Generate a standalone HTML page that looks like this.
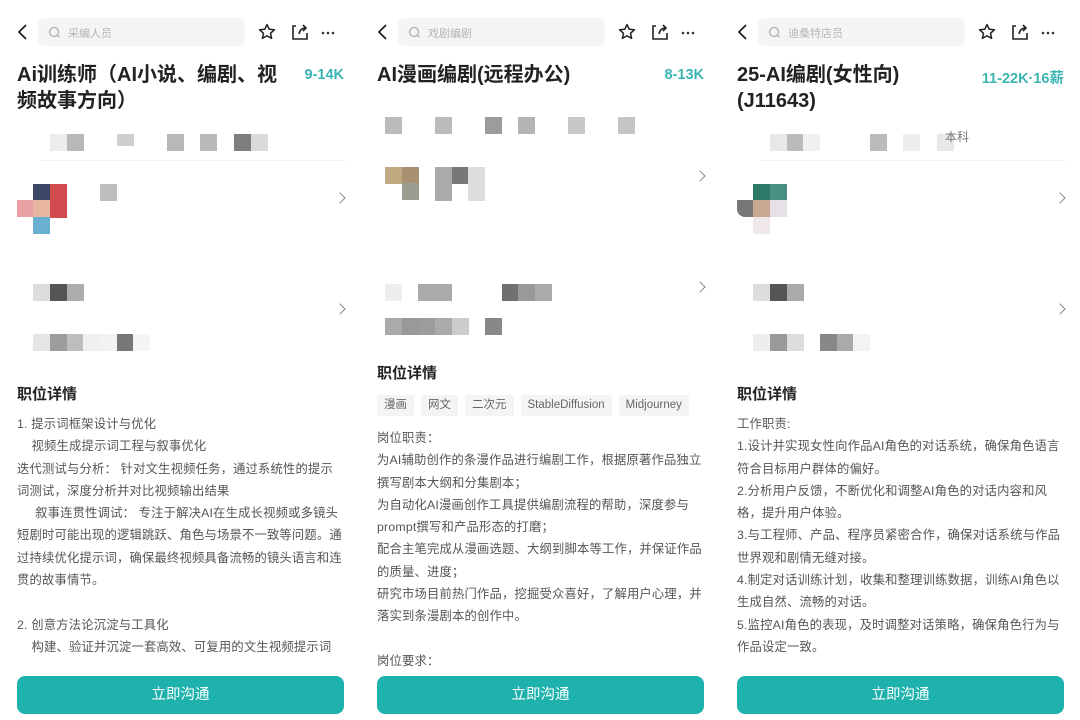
<!DOCTYPE html>
<html><head><meta charset="utf-8"><style>
*{margin:0;padding:0;box-sizing:border-box}
body{width:1080px;height:720px;background:#fff;position:relative;overflow:hidden;font-family:"Liberation Sans","Noto Sans CJK SC",sans-serif}
.p{position:absolute;top:0;width:360px;height:720px;overflow:hidden}
.a{position:absolute}
.search{position:absolute;left:38px;top:18px;width:207px;height:28px;background:#f5f5f5;border-radius:6px}
.search span{position:absolute;left:30px;top:7px;font-size:11px;color:#b5b5b5}
.title{position:absolute;left:17px;top:62px;font-size:20px;font-weight:bold;color:#222;line-height:26px;white-space:nowrap}
.sal{position:absolute;right:16px;top:67px;font-size:14.5px;font-weight:bold;color:#3bb5b2}
.b{position:absolute;width:17px;height:17px}
.h{position:absolute;left:17px;font-size:15px;font-weight:bold;color:#222}
.t{position:absolute;left:17px;font-size:12.3px;color:#555;line-height:22.3px;white-space:nowrap;letter-spacing:0.2px}
.btn{position:absolute;left:17px;top:676px;width:327px;height:38px;background:#1fb2ac;border-radius:8px;color:#fff;font-size:14.5px;text-align:center;line-height:38px}
.chev{position:absolute;left:336px;width:8px;height:8px;border-right:1.3px solid #888;border-top:1.3px solid #888;transform:rotate(45deg)}
.tag{display:inline-block;background:#f4f4f4;color:#666;font-size:11.5px;height:21px;line-height:21px;padding:0 7px;margin-right:7px;border-radius:2px}
.line{position:absolute;left:40px;top:160px;width:306px;height:1px;background:#f2f2f2}
svg.hd{position:absolute;left:0;top:0}
</style></head><body>

<div class="p" style="left:0">
<div class="search"><span>采编人员</span></div>
<svg class="hd" width="360" height="60"><path d="M26 25 L19 32 L26 39" fill="none" stroke="#222" stroke-width="1.8"/>
<circle cx="54" cy="32" r="4.5" fill="none" stroke="#aaa" stroke-width="1.2"/><path d="M57.5 35.5 L59.5 37.5" stroke="#aaa" stroke-width="1.2"/>
<path d="M267 24.5 L269.2 29.3 L274.4 29.8 L270.5 33.3 L271.6 38.4 L267 35.8 L262.4 38.4 L263.5 33.3 L259.6 29.8 L264.8 29.3 Z" fill="none" stroke="#222" stroke-width="1.5" stroke-linejoin="round"/>
<path d="M296 26 H293 V39 H307 V33" fill="none" stroke="#222" stroke-width="1.6"/><path d="M299 34 Q300 28 306 28 M303 25 L306 28 L303 31" fill="none" stroke="#222" stroke-width="1.6"/>
<circle cx="323" cy="33" r="1.3" fill="#333"/><circle cx="328" cy="33" r="1.3" fill="#333"/><circle cx="333" cy="33" r="1.3" fill="#333"/></svg>
<div class="title">Ai训练师（AI小说、编剧、视<br>频故事方向）</div>
<div class="sal">9-14K</div>
<div class="b" style="left:50px;top:134px;background:#ececec"></div><div class="b" style="left:67px;top:134px;background:#b8b8b8"></div><div class="b" style="left:117px;top:134px;background:#cfcfcf;height:12px"></div><div class="b" style="left:167px;top:134px;background:#b8b8b8"></div><div class="b" style="left:200px;top:134px;background:#bababa"></div><div class="b" style="left:234px;top:134px;background:#7e7e7e"></div><div class="b" style="left:251px;top:134px;background:#dadada"></div>
<div class="line"></div>
<div class="b" style="left:33px;top:184px;background:#3c4766"></div><div class="b" style="left:50px;top:184px;background:#d04a4e;height:34px"></div><div class="b" style="left:17px;top:200px;background:#e9a0a4"></div><div class="b" style="left:33px;top:200px;background:#e8b5a0"></div><div class="b" style="left:33px;top:217px;background:#6ab0d0"></div><div class="b" style="left:100px;top:184px;background:#bdbdbd"></div>
<div class="chev" style="top:194px"></div>
<div class="b" style="left:33px;top:284px;background:#dcdcdc"></div><div class="b" style="left:50px;top:284px;background:#555"></div><div class="b" style="left:67px;top:284px;background:#adadad"></div>
<div class="chev" style="top:305px"></div>
<div class="b" style="left:33px;top:334px;background:#e5e5e5"></div><div class="b" style="left:50px;top:334px;background:#9c9c9c"></div><div class="b" style="left:67px;top:334px;background:#bdbdbd"></div><div class="b" style="left:83px;top:334px;background:#f0f0f0"></div><div class="b" style="left:100px;top:334px;background:#f2f2f2"></div><div class="b" style="left:117px;top:334px;background:#777"></div><div class="b" style="left:133px;top:334px;background:#f5f5f5"></div>
<div class="h" style="top:383px">职位详情</div>
<div class="t" style="top:413px">1. 提示词框架设计与优化<br>&nbsp;&nbsp;&nbsp;&nbsp;视频生成提示词工程与叙事优化<br>迭代测试与分析：&nbsp;针对文生视频任务，通过系统性的提示<br>词测试，深度分析并对比视频输出结果<br>&nbsp;&nbsp;&nbsp;&nbsp;&nbsp;叙事连贯性调试：&nbsp;专注于解决AI在生成长视频或多镜头<br>短剧时可能出现的逻辑跳跃、角色与场景不一致等问题。通<br>过持续优化提示词，确保最终视频具备流畅的镜头语言和连<br>贯的故事情节。<br><br>2. 创意方法论沉淀与工具化<br>&nbsp;&nbsp;&nbsp;&nbsp;构建、验证并沉淀一套高效、可复用的文生视频提示词</div>
<div class="btn">立即沟通</div>
</div>

<div class="p" style="left:360px">
<div class="search"><span>戏剧编剧</span></div>
<svg class="hd" width="360" height="60"><path d="M26 25 L19 32 L26 39" fill="none" stroke="#222" stroke-width="1.8"/>
<circle cx="54" cy="32" r="4.5" fill="none" stroke="#aaa" stroke-width="1.2"/><path d="M57.5 35.5 L59.5 37.5" stroke="#aaa" stroke-width="1.2"/>
<path d="M267 24.5 L269.2 29.3 L274.4 29.8 L270.5 33.3 L271.6 38.4 L267 35.8 L262.4 38.4 L263.5 33.3 L259.6 29.8 L264.8 29.3 Z" fill="none" stroke="#222" stroke-width="1.5" stroke-linejoin="round"/>
<path d="M296 26 H293 V39 H307 V33" fill="none" stroke="#222" stroke-width="1.6"/><path d="M299 34 Q300 28 306 28 M303 25 L306 28 L303 31" fill="none" stroke="#222" stroke-width="1.6"/>
<circle cx="323" cy="33" r="1.3" fill="#333"/><circle cx="328" cy="33" r="1.3" fill="#333"/><circle cx="333" cy="33" r="1.3" fill="#333"/></svg>
<div class="title">AI漫画编剧(远程办公)</div>
<div class="sal">8-13K</div>
<div class="b" style="left:25px;top:117px;background:#bbb"></div><div class="b" style="left:75px;top:117px;background:#bbb"></div><div class="b" style="left:125px;top:117px;background:#9c9c9c"></div><div class="b" style="left:158px;top:117px;background:#b5b5b5"></div><div class="b" style="left:208px;top:117px;background:#c8c8c8"></div><div class="b" style="left:258px;top:117px;background:#c5c5c5"></div>
<div class="b" style="left:25px;top:167px;background:#c0a880"></div><div class="b" style="left:42px;top:167px;background:#a89070"></div><div class="b" style="left:42px;top:183px;background:#999e90"></div><div class="b" style="left:75px;top:167px;background:#aaa;height:34px"></div><div class="b" style="left:92px;top:167px;background:#777"></div><div class="b" style="left:108px;top:167px;background:#ddd;height:34px"></div>
<div class="chev" style="top:172px"></div>
<div class="b" style="left:25px;top:284px;background:#eee"></div><div class="b" style="left:58px;top:284px;background:#aaa;width:34px"></div><div class="b" style="left:142px;top:284px;background:#707070"></div><div class="b" style="left:158px;top:284px;background:#999"></div><div class="b" style="left:175px;top:284px;background:#aaa"></div>
<div class="chev" style="top:283px"></div>
<div class="b" style="left:25px;top:318px;background:#aaa"></div><div class="b" style="left:42px;top:318px;background:#999"></div><div class="b" style="left:58px;top:318px;background:#9c9c9c"></div><div class="b" style="left:75px;top:318px;background:#aaa"></div><div class="b" style="left:92px;top:318px;background:#ccc"></div><div class="b" style="left:125px;top:318px;background:#888"></div>
<div class="h" style="top:362px">职位详情</div>
<div class="a" style="left:17px;top:395px;white-space:nowrap"><span class="tag">漫画</span><span class="tag">网文</span><span class="tag">二次元</span><span class="tag">StableDiffusion</span><span class="tag">Midjourney</span></div>
<div class="t" style="top:427px">岗位职责：<br>为AI辅助创作的条漫作品进行编剧工作，根据原著作品独立<br>撰写剧本大纲和分集剧本；<br>为自动化AI漫画创作工具提供编剧流程的帮助，深度参与<br>prompt撰写和产品形态的打磨；<br>配合主笔完成从漫画选题、大纲到脚本等工作，并保证作品<br>的质量、进度；<br>研究市场目前热门作品，挖掘受众喜好，了解用户心理，并<br>落实到条漫剧本的创作中。<br><br>岗位要求：</div>
<div class="btn">立即沟通</div>
</div>

<div class="p" style="left:720px">
<div class="search"><span>迪桑特店员</span></div>
<svg class="hd" width="360" height="60"><path d="M26 25 L19 32 L26 39" fill="none" stroke="#222" stroke-width="1.8"/>
<circle cx="54" cy="32" r="4.5" fill="none" stroke="#aaa" stroke-width="1.2"/><path d="M57.5 35.5 L59.5 37.5" stroke="#aaa" stroke-width="1.2"/>
<path d="M267 24.5 L269.2 29.3 L274.4 29.8 L270.5 33.3 L271.6 38.4 L267 35.8 L262.4 38.4 L263.5 33.3 L259.6 29.8 L264.8 29.3 Z" fill="none" stroke="#222" stroke-width="1.5" stroke-linejoin="round"/>
<path d="M296 26 H293 V39 H307 V33" fill="none" stroke="#222" stroke-width="1.6"/><path d="M299 34 Q300 28 306 28 M303 25 L306 28 L303 31" fill="none" stroke="#222" stroke-width="1.6"/>
<circle cx="323" cy="33" r="1.3" fill="#333"/><circle cx="328" cy="33" r="1.3" fill="#333"/><circle cx="333" cy="33" r="1.3" fill="#333"/></svg>
<div class="title">25-AI编剧(女性向)<br>(J11643)</div>
<div class="sal">11-22K·16薪</div>
<div class="b" style="left:50px;top:134px;background:#e8e8e8"></div><div class="b" style="left:67px;top:134px;background:#bbb"></div><div class="b" style="left:83px;top:134px;background:#f0f0f0"></div><div class="b" style="left:150px;top:134px;background:#bbb"></div><div class="b" style="left:183px;top:134px;background:#eee"></div><div class="b" style="left:217px;top:134px;background:#e8e8e8"></div>
<div class="a" style="left:225px;top:128px;font-size:12px;color:#777">本科</div>
<div class="line"></div>
<div class="b" style="left:33px;top:184px;background:#2e7a68"></div><div class="b" style="left:50px;top:184px;background:#4a9080"></div><div class="b" style="left:17px;top:200px;background:#777;border-radius:0 0 0 8px"></div><div class="b" style="left:33px;top:200px;background:#c8a890"></div><div class="b" style="left:50px;top:200px;background:#e8e0e8"></div><div class="b" style="left:33px;top:217px;background:#f0e8e8"></div>
<div class="chev" style="top:194px"></div>
<div class="b" style="left:33px;top:284px;background:#ddd"></div><div class="b" style="left:50px;top:284px;background:#555"></div><div class="b" style="left:67px;top:284px;background:#aaa"></div>
<div class="chev" style="top:305px"></div>
<div class="b" style="left:33px;top:334px;background:#eee"></div><div class="b" style="left:50px;top:334px;background:#999"></div><div class="b" style="left:67px;top:334px;background:#ddd"></div><div class="b" style="left:100px;top:334px;background:#888"></div><div class="b" style="left:117px;top:334px;background:#aaa"></div><div class="b" style="left:133px;top:334px;background:#f3f3f3"></div>
<div class="h" style="top:383px">职位详情</div>
<div class="t" style="top:413px">工作职责:<br>1.设计并实现女性向作品AI角色的对话系统，确保角色语言<br>符合目标用户群体的偏好。<br>2.分析用户反馈，不断优化和调整AI角色的对话内容和风<br>格，提升用户体验。<br>3.与工程师、产品、程序员紧密合作，确保对话系统与作品<br>世界观和剧情无缝对接。<br>4.制定对话训练计划，收集和整理训练数据，训练AI角色以<br>生成自然、流畅的对话。<br>5.监控AI角色的表现，及时调整对话策略，确保角色行为与<br>作品设定一致。</div>
<div class="btn">立即沟通</div>
</div>
</body></html>
